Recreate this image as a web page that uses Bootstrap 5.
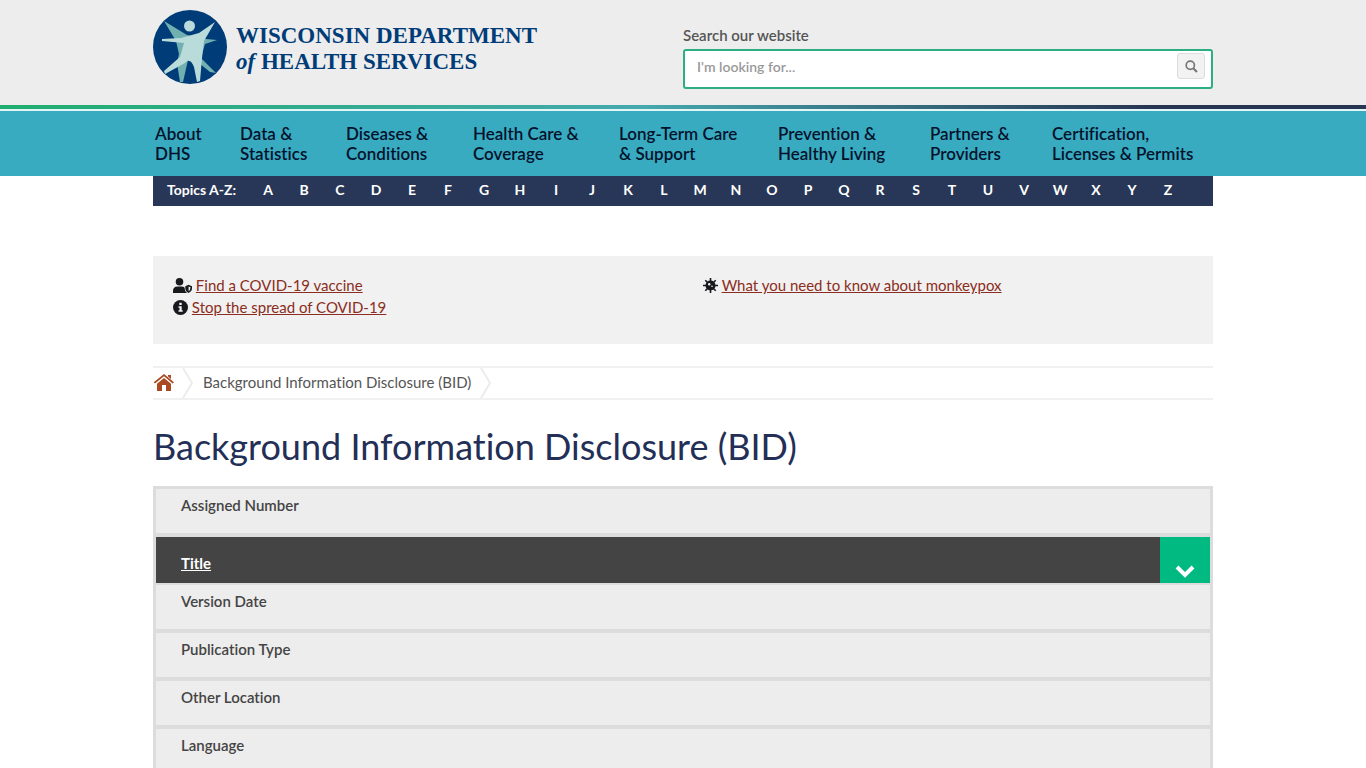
<!DOCTYPE html>
<html lang="en">
<head>
<meta charset="utf-8">
<meta name="viewport" content="width=device-width, initial-scale=1">
<title>Background Information Disclosure (BID)</title>
<link href="https://cdn.jsdelivr.net/npm/bootstrap@5.3.0/dist/css/bootstrap.min.css" rel="stylesheet">
<style>
body{font-family:Lato,"Open Sans",sans-serif;font-size:15px;line-height:22px;color:#444;font-variant-ligatures:none}
.wrap{width:100%;max-width:1060px;margin:0 auto}
.site-head{background:#ededed;padding:10px 0 16px}
.brand{color:#003c78;font:bold 23px/26px "Liberation Serif",serif}
.brand:hover{color:#003c78}
.brand svg{width:74px;height:74px}
.brand span{padding:13px 0 0 9px}
.brand i{font-weight:bold}
.search{width:50%;padding-top:14px}
.search label{font-weight:600;color:#555;line-height:22px;margin-bottom:3px}
.search-box{border:2px solid #2bae80;border-radius:3px;background:#fff;height:40px;padding:2px 6px 0 12px}
.search-box input{border:0;outline:0;background:none;font-size:14px;line-height:20px;height:26px;padding:0}
.search-box input::placeholder{color:#999;font-weight:600;opacity:1}
.search-box button{width:28px;height:26px;border:1px solid #ddd;border-radius:3px;background:#f2f2f2}
.stripe{height:6px;border-bottom:2px solid #e2f5f7;background:linear-gradient(90deg,#1fae70,#45a9ae 47%,#283653 84%)}
.main-nav{background:#38abc0;height:65px}
.nav-grid{display:grid;grid-template-columns:85fr 106fr 127fr 146fr 159fr 152fr 122fr 161fr;padding:13px 0 0 2px;list-style:none}
.nav-grid a{color:#04122c;font-size:17px;line-height:20px;font-weight:600;text-decoration:none;display:block;white-space:nowrap}
.topics{background:#283757;color:#fff;height:30px;font-size:14px;line-height:28px;font-weight:700;padding-left:14px}
.topics span{width:83px}
.topics a{color:#fff;width:36px;text-align:center;text-decoration:none}
.alerts{background:#f1f1f1;margin-top:50px;height:88px;padding:18px 0}
.alerts .half{width:50%;padding-left:20px}
.alerts svg{fill:#17191c;height:15px;vertical-align:-2px}
.alerts a{color:#8b2d20}
.crumbs{margin-top:22px;height:34px;border-top:2px solid #f1f1f1;border-bottom:2px solid #f1f1f1}
.crumbs .home{padding-bottom:2px}
.crumbs .sep{width:11px;height:30px;fill:none;stroke:#ececec;stroke-width:2}
.crumb-text{margin:0 9px 0 10px;line-height:28px;color:#555}
h1{color:#232f56;font-size:36px;line-height:44px;font-weight:400;margin:24px 0 18px}
.fields{width:100%;border:3px solid #dcdcdc;border-bottom-width:0;border-collapse:separate;border-spacing:0}
.fields th{height:48px;background:#ededed;border-bottom:4px solid #dcdcdc;padding:5px 25px;vertical-align:top;font-weight:600}
.fields th.sorted{background:#444;border-bottom-width:2px;padding:0}
.fields .sorted a{color:#fff;font-weight:700;padding:15px 0 8px 25px;height:46px}
.fields .sorted button{background:#00ba82;width:50px;height:46px;border:0;padding:22px 0 0}
</style>
</head>
<body>
<header>
<div class="site-head">
<div class="wrap d-flex align-items-start">
<a href="#" class="brand d-flex text-decoration-none w-50">
<svg viewBox="0 0 74 74" aria-hidden="true"><circle cx="37" cy="37" r="37" fill="#003c78"/><g fill="#70b0b0"><path d="M11 11 34 25 53 29 64 30 52 34 48 48 63 63 57 62 41 49 35 50 30 72 27 72 24 53 26 44 23 31Z"/></g><path fill="#b9dcda" d="M62 12 51 31 49 48 47 71 44 72 41 57Q37 47 32 53L12 64 11 61 27 47 31 33 9 31 9 29 28 28 46 23Z"/><circle cx="36.500" cy="16" r="5.500" fill="#b9dcda"/></svg>
<span class="text-nowrap">WISCONSIN DEPARTMENT<br><i>of</i> HEALTH SERVICES</span></a>
<form class="search">
<label for="q" class="d-block">Search our website</label>
<div class="search-box d-flex align-items-start"><input id="q" type="text" class="flex-grow-1" placeholder="I'm looking for..."><button type="button" class="p-0 d-flex align-items-center justify-content-center" aria-label="Search"><svg width="13" height="13" viewBox="0 0 13 13" fill="none" stroke="#777" stroke-width="1.700"><circle cx="5.300" cy="5.300" r="4.100"/><path stroke-width="2.200" d="m8.500 8.500 3.500 3.500"/></svg></button></div>
</form>
</div>
</div>
<div class="stripe"></div>
<nav class="main-nav" aria-label="Main"><ul class="nav-grid wrap">
<li><a href="#">About<br>DHS</a></li><li><a href="#">Data &amp;<br>Statistics</a></li><li><a href="#">Diseases &amp;<br>Conditions</a></li><li><a href="#">Health Care &amp;<br>Coverage</a></li><li><a href="#">Long-Term Care<br>&amp; Support</a></li><li><a href="#">Prevention &amp;<br>Healthy Living</a></li><li><a href="#">Partners &amp;<br>Providers</a></li><li><a href="#">Certification,<br>Licenses &amp; Permits</a></li>
</ul></nav>
<nav class="topics wrap d-flex" aria-label="Topics"><span>Topics A-Z:</span><a href="#">A</a><a href="#">B</a><a href="#">C</a><a href="#">D</a><a href="#">E</a><a href="#">F</a><a href="#">G</a><a href="#">H</a><a href="#">I</a><a href="#">J</a><a href="#">K</a><a href="#">L</a><a href="#">M</a><a href="#">N</a><a href="#">O</a><a href="#">P</a><a href="#">Q</a><a href="#">R</a><a href="#">S</a><a href="#">T</a><a href="#">U</a><a href="#">V</a><a href="#">W</a><a href="#">X</a><a href="#">Y</a><a href="#">Z</a></nav>
</header>
<main class="wrap">
<div class="alerts d-flex">
<div class="half">
<div><svg viewBox="0 0 19 15" width="19" aria-hidden="true"><circle cx="6.500" cy="3.800" r="3.800"/><path d="M0 15v-2Q0 8.500 4.500 8.500h4Q10.500 8.500 11.500 9.500 11.500 13 14 15Z"/><path fill-rule="evenodd" d="m15.500 6.800 3.500 1.500v2Q19 13.500 15.500 15 12.300 13.500 12.300 10.300v-2ZM15.600 8.500v4.700Q17.500 12 17.500 9.300Z"/></svg> <a href="#">Find a COVID-19 vaccine</a></div>
<div><svg viewBox="0 0 15 15" width="15" aria-hidden="true"><circle cx="7.500" cy="7.500" r="7.500"/><path fill="#f1f1f1" d="M6.300 2.800h2.400v2.300H6.300ZM5.500 6.200h3.200v4h1v1.600H5.500v-1.600h1V7.700h-1Z"/></svg> <a href="#">Stop the spread of COVID-19</a></div>
</div>
<div class="half">
<div><svg viewBox="0 0 15 15" width="15" aria-hidden="true"><circle cx="7.500" cy="7.500" r="5"/><path stroke="#17191c" stroke-width="1.600" d="M7.500 0v15M0 7.500h15M2.300 2.300l10.400 10.400M12.700 2.300 2.300 12.700"/><circle cx="6.200" cy="6.200" r="1.200" fill="#f1f1f1"/><circle cx="9" cy="8.300" r=".8" fill="#f1f1f1"/></svg> <a href="#">What you need to know about monkeypox</a></div>
</div>
</div>
<nav class="crumbs d-flex" aria-label="Breadcrumb">
<a href="#" aria-label="Home" class="home me-2 d-flex align-items-center"><svg width="21" height="17" viewBox="0 0 21 17" fill="#a94a22"><path d="M11 0 21 8.200 19.700 9.500 11 2.300 2 9.500.7 8.200ZM15 1h3v4l-3-2.500Z"/><path d="m11 4 7 5.800V17h-5v-6H9v6H4V9.800Z"/></svg></a>
<svg class="sep" viewBox="0 0 11 30"><path d="m1 0 9 15-9 15"/></svg>
<span class="crumb-text">Background Information Disclosure (BID)</span>
<svg class="sep" viewBox="0 0 11 30"><path d="m1 0 9 15-9 15"/></svg>
</nav>
<h1>Background Information Disclosure (BID)</h1>
<table class="fields">
<tr><th scope="row">Assigned Number</th></tr>
<tr><th scope="row" class="sorted"><div class="d-flex justify-content-between"><a href="#">Title</a><button type="button" aria-label="Sort"><svg class="d-block mx-auto" width="20" height="24" viewBox="0 0 20 24" fill="none" stroke="#fff" stroke-width="4"><path d="m2 8 8 8 8-8"/></svg></button></div></th></tr>
<tr><th scope="row">Version Date</th></tr>
<tr><th scope="row">Publication Type</th></tr>
<tr><th scope="row">Other Location</th></tr>
<tr><th scope="row">Language</th></tr>
</table>
</main>
<script src="https://cdn.jsdelivr.net/npm/bootstrap@5.3.0/dist/js/bootstrap.bundle.min.js"></script>
</body>
</html>
